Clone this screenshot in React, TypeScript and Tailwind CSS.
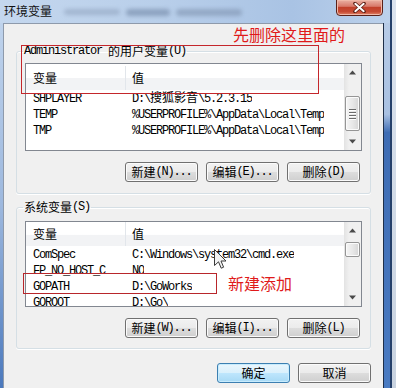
import React from 'react';

const mono = "font-['Liberation_Mono',monospace] tracking-[-1.2px] whitespace-pre";
const cjk = "font-['Noto_Sans_CJK_SC',sans-serif]";

// ASCII runs in a fixed 6px pitch, CJK runs at full width, like SimSun 9pt
function Txt({ s }: { s: string }) {
  const runs = s.match(/[\x20-\x7e]+|[^\x20-\x7e]+/g) ?? [];
  return (
    <>
      {runs.map((r, i) => (
        <span key={i} className={/^[\x20-\x7e]/.test(r) ? mono : cjk}>
          {r}
        </span>
      ))}
    </>
  );
}

function Arrow({ down }: { down?: boolean }) {
  return (
    <div className="h-[17px] flex items-center justify-center shrink-0">
      <svg width="7" height="5" viewBox="0 0 7 5">
        <path d={down ? 'M0 0.5 H7 L3.5 4.5 Z' : 'M3.5 0.5 L7 4.5 H0 Z'} fill="#4a4a4a" />
      </svg>
    </div>
  );
}

function ScrollBar({ top, height, grip }: { top: number; height: number; grip?: boolean }) {
  return (
    <div className="w-[17px] shrink-0 flex flex-col bg-[linear-gradient(90deg,#e3e3e3,#f0f0f0_30%,#f0f0f0)]">
      <Arrow />
      <div
        className="mx-px rounded-[2px] border border-[#959595] bg-[linear-gradient(90deg,#f5f5f5,#e8e8e8_50%,#d6d6d6)] shadow-[inset_0_0_0_1px_#fbfbfb] flex flex-col items-center justify-center gap-[2px]"
        style={{ marginTop: top, height }}
      >
        {grip &&
          [0, 1, 2, 3].map((i) => <div key={i} className="w-[7px] h-px bg-[#6b6b6b] shadow-[0_1px_0_#ffffff]" />)}
      </div>
      <div className="flex-1" />
      <Arrow down />
    </div>
  );
}

function Row({ name, value }: { name: string; value: string }) {
  return (
    <div className="flex h-[16px] items-center whitespace-nowrap shrink-0">
      <div className="w-[100px] pl-[7px] shrink-0 overflow-hidden">
        <Txt s={name} />
      </div>
      <div className="pl-[6px] overflow-hidden">
        <Txt s={value} />
      </div>
    </div>
  );
}

function VarList({
  height,
  headerH,
  headerPad,
  rows,
  thumbTop,
  thumbH,
  grip,
}: {
  height: number;
  headerH: number;
  headerPad: number;
  rows: [string, string][];
  thumbTop: number;
  thumbH: number;
  grip?: boolean;
}) {
  return (
    <div className="flex border border-[#828790] bg-white overflow-hidden" style={{ height }}>
      <div className="flex-1 flex flex-col overflow-hidden">
        <div
          className="flex shrink-0 items-center bg-[linear-gradient(#ffffff,#ffffff_52%,#f2f3f5_53%,#f2f3f5)]"
          style={{ height: headerH, paddingTop: headerPad }}
        >
          <div className="w-[100px] h-full flex items-center pl-[7px] border-r border-[#e2e6eb]">
            <Txt s="变量" />
          </div>
          <div className="pl-[6px]">
            <Txt s="值" />
          </div>
        </div>
        {rows.map(([n, v]) => (
          <Row key={n} name={n} value={v} />
        ))}
      </div>
      <ScrollBar top={thumbTop} height={thumbH} grip={grip} />
    </div>
  );
}

function Btn({ label, def }: { label: string; def?: boolean }) {
  return (
    <div
      className={
        'w-[73px] h-[20px] shrink-0 rounded-[3px] border flex items-center justify-center ' +
        (def
          ? 'border-[#3c7fb1] bg-[linear-gradient(#eaf6fd,#d9f0fc_50%,#bee6fd_51%,#a7d9f5)] shadow-[inset_0_0_0_1px_#c8ecfd]'
          : 'border-[#707070] bg-[linear-gradient(#f2f2f2,#ebebeb_50%,#dddddd_51%,#cfcfcf)] shadow-[inset_0_0_0_1px_#fbfbfb]')
      }
    >
      <span className="leading-[14px] h-[14px] flex items-center">
        <Txt s={label} />
      </span>
    </div>
  );
}

function Group({
  label,
  mt,
  pt,
  pb,
  children,
  buttons,
}: {
  label: string;
  mt: number;
  pt: number;
  pb: number;
  children: React.ReactNode;
  buttons: string[];
}) {
  return (
    <fieldset
      className="mx-[12px] border border-[#d5dfe5] rounded-[3px] shadow-[0_1px_0_#ffffff,inset_0_1px_0_#ffffff]"
      style={{ marginTop: mt }}
    >
      <legend className="ml-[6px] px-[1px] h-[14px] leading-[14px] whitespace-nowrap flex items-center">
        <Txt s={label} />
      </legend>
      <div className="px-[8px]" style={{ paddingTop: pt, paddingBottom: pb }}>
        {children}
        <div className="mt-[11px] mr-[2px] flex justify-end gap-[8px]">
          {buttons.map((b) => (
            <Btn key={b} label={b} />
          ))}
        </div>
      </div>
    </fieldset>
  );
}

export default function App() {
  return (
    <div className="relative w-[396px] h-[388px] overflow-hidden flex bg-[#d3dbe6] text-[12px] leading-[16px] text-black">
      <div className="w-[390px] shrink-0 flex flex-col">
        {/* title bar */}
        <div className="h-[23px] shrink-0 flex items-start bg-[linear-gradient(90deg,#c4d7ee,#b9cfea_40%,#a9c3e4_75%,#bcd1eb)]">
          <span className={'mt-[4px] ml-[4px] leading-[14px] text-[#111] ' + cjk}>环境变量</span>
          <div className="ml-[12px] mt-[9px] flex gap-[6px] blur-[2px] opacity-60">
            <div className="w-[56px] h-[6px] rounded bg-[#8fa2bd]" />
            <div className="w-[44px] h-[7px] rounded bg-[#6f84a3]" />
            <div className="w-[66px] h-[7px] rounded bg-[#7d91ae]" />
          </div>
          <div className="ml-auto mr-[7px] w-[47px] h-[17px] -mt-px rounded-b-[4px] border border-[#5a2119] bg-[linear-gradient(#eab0a3,#d8796a_42%,#c2402b_50%,#c64a33_78%,#e2876a)] shadow-[inset_0_0_0_1px_#f0b8a8] flex items-center justify-center">
            <svg width="13" height="11" viewBox="0 0 13 11">
              <path d="M2 1.5 L11 9.5 M11 1.5 L2 9.5" stroke="#5a1e14" strokeWidth="3.6" strokeLinecap="round" />
              <path d="M2.3 1.8 L10.7 9.2 M10.7 1.8 L2.3 9.2" stroke="#ffffff" strokeWidth="2" strokeLinecap="round" />
            </svg>
          </div>
        </div>

        <div className="flex flex-1 min-h-0">
          <div className="w-[3px] bg-[linear-gradient(#bfd3ec,#9db8de_50%,#4b79bd)]" />
          <div className="flex-1 flex flex-col bg-[#f0f0f0] border-l border-t border-[#8e9aab]">
            <Group label="Administrator 的用户变量(U)" mt={20} pt={5} pb={11} buttons={['新建(N)...', '编辑(E)...', '删除(D)']}>
              <VarList
                height={88}
                headerH={26}
                headerPad={2}
                rows={[
                  ['SHPLAYER', 'D:\\搜狐影音\\5.2.3.15'],
                  ['TEMP', '%USERPROFILE%\\AppData\\Local\\Temp'],
                  ['TMP', '%USERPROFILE%\\AppData\\Local\\Temp'],
                ]}
                thumbTop={15}
                thumbH={35}
                grip
              />
            </Group>

            <Group label="系统变量(S)" mt={6} pt={7} pb={10} buttons={['新建(W)...', '编辑(I)...', '删除(L)']}>
              <VarList
                height={86}
                headerH={24}
                headerPad={0}
                rows={[
                  ['ComSpec', 'C:\\Windows\\system32\\cmd.exe'],
                  ['FP_NO_HOST_C', 'NO'],
                  ['GOPATH', 'D:\\GoWorks'],
                  ['GOROOT', 'D:\\Go\\'],
                ]}
                thumbTop={3}
                thumbH={15}
              />
            </Group>

            <div className="mx-[12px] mt-[14px] flex justify-end gap-[8px]">
              <Btn label="确定" def />
              <Btn label="取消" />
            </div>
          </div>
          <div className="w-[7px] border-l border-[#1f2f48] bg-[linear-gradient(#b7cbe6,#a9c1e2_25%,#3f6db4_30%,#4a7bc2)]" />
        </div>
      </div>
      <div className="w-[6px] border-l-2 border-[#25406a] bg-[linear-gradient(#dbe3ee,#c9d3e0)]" />

      {/* annotations drawn over the dialog */}
      <div className="absolute left-[21px] top-[45px] w-[298px] h-[49px] border border-[#c4262b]" />
      <div className={'absolute left-[233px] top-[26px] text-[16px] leading-[16px] text-[#e01a1a] ' + cjk}>先删除这里面的</div>
      <div className="absolute left-[23px] top-[273px] w-[194px] h-[21px] border border-[#b8262b]" />
      <div className={'absolute left-[228px] top-[275px] text-[16px] leading-[16px] text-[#e01a1a] ' + cjk}>新建添加</div>
      <svg className="absolute left-[214px] top-[249px]" width="13" height="21" viewBox="0 0 13 21">
        <path d="M0.5 0.5 V16.5 L4.5 12.8 L7.2 19.2 L9.6 18.2 L7 12 H12 Z" fill="#f2f2f2" stroke="#3a3a3a" strokeWidth="1" strokeLinejoin="round" />
      </svg>
    </div>
  );
}
